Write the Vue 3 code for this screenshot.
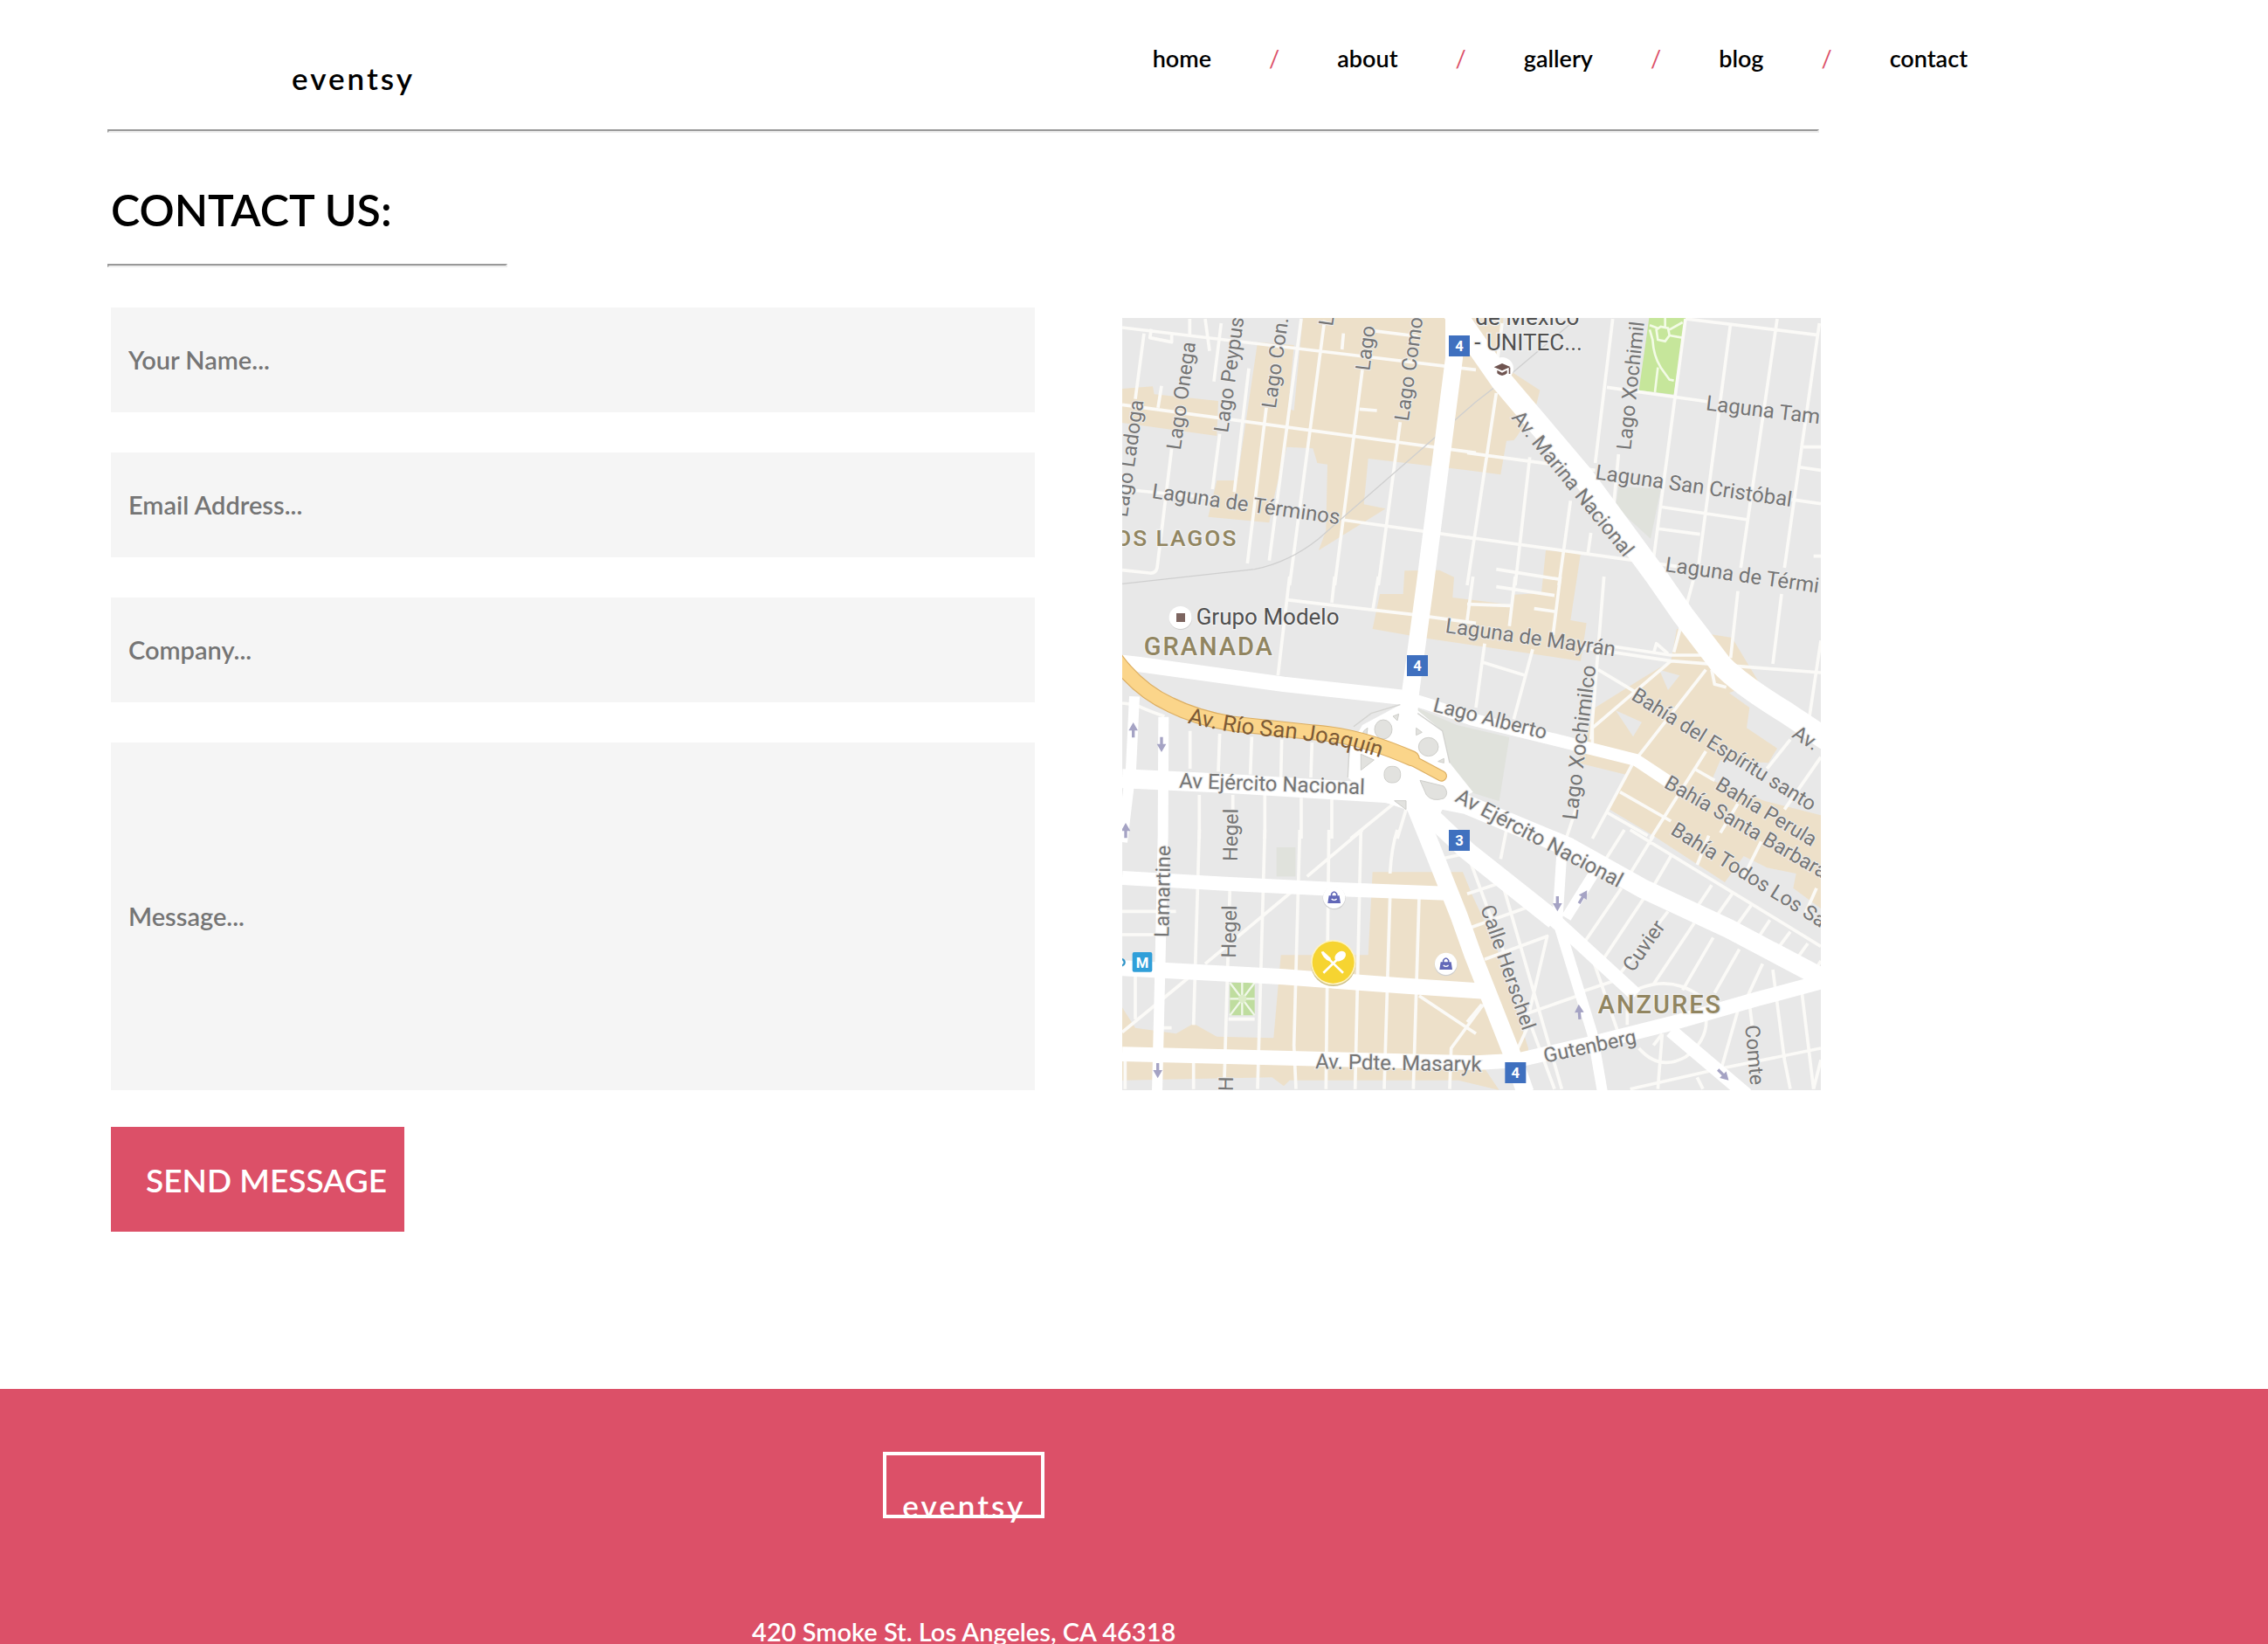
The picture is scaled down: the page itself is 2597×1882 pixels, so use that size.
<script setup>
import { reactive } from 'vue'

const links = ['home', 'about', 'gallery', 'blog', 'contact']
const form = reactive({ name: '', email: '', company: '', message: '' })

// The map is split in six tiles; each tile has its own origin.
const tiles = [
  {
    x: -45, y: -42,
    roads: 'M45 75L1260 220M45 340L1260 505M45 630L350 660M800 735L1260 800M120 95L90 320M215 490L165 900Q160 920 140 918L45 908M180 275L168 350M385 60L360 260M380 440L355 630M480 215L430 640M540 350L475 885M660 45L550 875M740 50L620 960M870 220L775 960M1000 400L925 960M805 95L800 150M900 85L1060 105M860 355L920 360M145 80L140 110L215 125V95M330 45L345 155M277 45V100',
    labels: [
      [62, 728, -82, 'Lago Ladoga'], [245, 497, -82, 'Lago Onega'], [408, 438, -82, 'Lago Peypus'],
      [572, 355, -82, 'Lago Con.'], [768, 72, -82, 'L'], [895, 225, -83, 'Lago'],
      [1028, 398, -82, 'Lago Como']
    ],
    wide: [[145, 660, 8, 'Laguna de Términos']]
  },
  {
    x: 1185, y: -42,
    roads: 'M500 45L440 540M520 510L500 720M905 60L795 890M1065 45L940 900M1210 60L1090 900M750 45L640 870M0 505L440 565M1110 665L1215 680M0 795L720 895M100 300L0 960M215 520L165 960M355 670L315 960M425 780L415 850M480 280L830 330M750 45L1200 100M660 690L965 735M650 765L800 785M1155 485H1215M1145 555L1215 565M100 905L320 940M120 60L105 180M1190 860H1215',
    labels: [
      [562, 497, -84, 'Lago Xochimil'], [150, 385, 51, 'Av. Marina Nacional']
    ],
    wide: [
      [818, 358, 7, 'Laguna Tam'],
      [438, 595, 8, 'Laguna San Cristóbal'], [678, 912, 8, 'Laguna de Térmi']
    ]
  },
  {
    x: -45, y: 888,
    roads: 'M620 0L580 340M775 0L765 90M925 0L905 120M610 80L1040 130L1260 160M45 435L90 440Q130 460 190 480M278 530V660M380 540L375 670M490 550L485 680M593 560L590 690M697 570L693 690M310 750V900M425 750V810M535 750V900M660 760V900M765 760V900M990 770L830 900M1020 800L990 900M1250 0L1230 150',
    labels: [[1110, 462, 14, 'Lago Alberto']],
    wide: [
      [240, 725, 2, 'Av Ejército Nacional'], [1153, 192, 8, 'Laguna de Mayrán'],
      [1185, 770, 28, 'Av Ejército Nacional']
    ]
  },
  {
    x: 1185, y: 888,
    roads: 'M470 0L425 560M165 0L145 170M320 0L295 200M0 95L150 100M100 35L300 65M230 110L300 120M780 0L710 260M930 50L905 280M1080 60L1050 300M1215 220L1170 520M500 240L700 270L820 270M400 245L700 290L1215 330M640 265L650 230L690 265M700 290L430 520V600M820 320L570 640L430 900M450 320L600 410M60 230L30 450M225 250L160 490M55 295L200 340M1110 560L1030 660M1215 620L1090 800M820 600L630 900M780 660L850 700M525 740L700 840M480 810L620 890M930 780L870 880M380 780L340 900M840 320L850 370L890 380',
    labels: [
      [848, 727, 31, 'Bahía Perula'], [673, 722, 30, 'Bahía Santa Barbara'],
      [695, 882, 32, 'Bahía Todos Los Sa'], [1112, 550, 32, 'Av.'], [560, 420, 32, 'Bahía del Espíritu santo']
    ],
    wide: [[377, 838, -83, 'Lago Xochimilco']]
  },
  {
    x: -45, y: 1758,
    roads: 'M310 0L290 670M290 790V890M420 0L415 100M415 200L395 890M535 0L510 890M655 0L635 740L642 890M755 0L745 890M865 0L845 890M990 0Q970 60 965 150M965 230L945 890M1065 230L1045 890M870 0L680 160M630 210L330 460M270 510L45 695M45 280H230M45 360H160M90 500V650M55 790V890M1065 570L1260 700M1285 600L1175 750L1170 890M185 680H215M410 650H500M1140 100L1230 80',
    labels: [
      [205, 370, -89, 'Lamartine'], [440, 108, -89, 'Hegel'], [435, 440, -89, 'Hegel'], [425, 898, -89, 'H']
    ],
    wide: [[708, 820, 1, 'Av. Pdte. Masaryk']]
  },
  {
    x: 1185, y: 1758,
    roads: 'M560 0L1215 400M540 0L470 110M640 20L560 150M700 90L630 210M830 20L790 120M1010 40L950 160M1200 200L1160 290M840 190L780 280M910 220L840 320M975 260L910 350M1040 310L980 400M1110 350L1050 430M1170 390L1120 460M1215 450L1190 490M530 200L400 390M610 230L470 440M690 280L520 500M780 320L640 530M845 370L740 550M935 410L850 560M1015 460L950 600M1050 480L1090 790L1110 890M1150 560L1190 890M970 600L980 680M930 620L870 830M590 545Q700 500 800 570M820 640Q830 720 750 780Q660 830 590 750M550 620V670M670 700L655 890M560 890L870 820L1215 750M380 560L530 510M180 640L380 570M430 440L520 700M120 180L325 890M0 80L300 890M0 220L120 180M0 340L210 265M60 445L275 365L215 620M1215 790L1190 890M135 0L115 100M640 740L670 700M220 650L170 760M790 850L810 890M0 660L50 600',
    labels: [
      [570, 492, -55, 'Cuvier'], [268, 800, -12, 'Gutenberg'], [955, 672, 85, 'Comte'], [45, 268, 71, 'Calle Herschel']
    ],
    wide: []
  }
]

const shields = [[1122, 60, 4], [978, 1158, 4], [1122, 1758, 3], [1315, 2556, 4]]
const bags = [[728, 1990], [1112, 2218]]
const arrows = [
  [38, 1415, 0], [135, 1465, 180], [12, 1760, 0], [122, 2585, 180],
  [1495, 2012, 180], [1583, 1988, 32], [1570, 2383, -4], [2065, 2600, 135]
]
</script>

<template>
  <div class="page">
    <header class="header">
      <a class="logo" href="#">eventsy</a>
      <nav class="nav">
        <template v-for="(link, i) in links" :key="link">
          <span v-if="i" class="slash">/</span>
          <a :href="'#' + link">{{ link }}</a>
        </template>
      </nav>
    </header>

    <main class="main">
      <hr class="rule">
      <h1 class="title">CONTACT US:</h1>
      <hr class="rule rule-short">

      <div class="columns">
        <form class="form" @submit.prevent>
          <input v-model="form.name" type="text" placeholder="Your Name..." aria-label="Your name">
          <input v-model="form.email" type="email" placeholder="Email Address..." aria-label="Email address">
          <input v-model="form.company" type="text" placeholder="Company..." aria-label="Company">
          <textarea v-model="form.message" placeholder="Message..." aria-label="Message"></textarea>
          <button type="submit">SEND MESSAGE</button>
        </form>

        <svg class="map" viewBox="0 0 2400 2652" role="img" aria-label="Map">
          <rect width="2400" height="2652" fill="#e8e8e8" />

          <g fill="#ede0c9">
            <path d="M0 243L105 235L110 262L330 285L325 405L0 360Z" />
            <path d="M465 83L590 93L570 313L590 318L620 0L1310 0L1290 150L1330 180L1435 248L1420 308L1355 408L1345 420L1320 422L1300 538L1185 523L845 483L830 640L905 655L675 798L700 730L705 503L670 498L655 448L565 443L525 600L505 703L295 683L325 558L395 558Z" />
            <path d="M860 1068L885 948L965 948L970 868L1090 866L1140 890L1135 960L1335 985L1345 950L1440 945L1455 798L1575 808L1540 1038L1595 1048L1575 1178L1045 1100Z" />
            <path transform="translate(1185 888)" d="M720 180L910 210L1000 360L900 400L970 450L960 520L1065 590L1035 640L870 630L840 700L1020 770L1215 820V1140L1120 1070L1130 1020L1030 1000L950 960L885 1050L640 890L490 800L545 680L380 640L440 450L600 350L700 290Z" />
            <path transform="translate(-45 1758)" d="M905 145L1215 145L1250 230L1330 400L1440 750L1440 770L1260 775L1340 894L1200 860L620 860L600 880L560 850L45 860V610L90 680L230 700L290 665L370 710L565 715L590 430L890 430Z" />
          </g>
          <g fill="#e8e8e8">
            <path d="M1695 1348L1785 1388L1755 1438ZM1845 1208L1915 1228L1875 1278ZM1345 910L1440 915L1435 945L1345 940Z" />
          </g>
          <g fill="#e0e2dc">
            <path d="M1705 578L1850 588L1815 758L1695 648Z" />
            <path d="M1010 1338L1150 1398L1330 1440L1295 1660L1200 1630L1115 1520Z" />
            <path d="M530 1818H595V1918H530Z" />
          </g>
          <path d="M1810 0H1935L1895 263L1775 248Z" fill="#c6e69b" />
          <g fill="none" stroke="#f3fbe6" stroke-width="8">
            <path d="M1812 40L1822 75Q1825 130 1850 170L1880 212L1895 215M1840 170L1830 255M1835 40L1850 30L1875 35L1880 60L1865 80L1840 75ZM1880 40L1925 15M1880 60L1925 68M1865 30V0M1840 35L1812 25" />
          </g>
          <path d="M370 2283H455V2395H370Z" fill="#bfdd9f" />
          <path d="M370 2283L455 2395M455 2283L370 2395M412 2283V2395M370 2338H455" stroke="#f1f8ea" stroke-width="7" />
          <circle cx="413" cy="2338" r="14" fill="#dcecc8" />

          <g fill="none" stroke="#fbfaf7" stroke-width="11" stroke-linejoin="round">
            <path v-for="t in tiles" :key="t.x + '/' + t.y" :transform="`translate(${t.x} ${t.y})`" :d="t.roads" />
          </g>
          <path d="M0 913L455 863Q575 838 675 758L1215 288L1305 218L1540 20" fill="none" stroke="#cfcfcf" stroke-width="4" />

          <g fill="none" stroke="#fff" stroke-linejoin="round">
            <path stroke-width="60" d="M1140 -20L1140 138L1040 918L990 1288L975 1488" />
            <path stroke-width="76" d="M1125 -40L1305 218L1585 548L1835 888L1925 1018L2055 1188Q2120 1258 2285 1358L2420 1448" />
            <path stroke-width="52" d="M0 1183L60 1190L555 1258L965 1303" />
            <path stroke-width="42" d="M965 1300L1055 1328L1200 1378L1485 1448L1765 1518L1885 1598" />
            <path stroke-width="66" d="M0 1582L355 1598L905 1632L1105 1656L1185 1672L1535 1818L1785 1958L2085 2098L2420 2275" />
            <path stroke-width="60" d="M975 1600L1055 1798L1155 2048L1205 2188L1335 2518L1385 2660" />
            <path stroke-width="64" d="M985 1640L1185 1830L1485 2068" />
            <path stroke-width="48" d="M1485 2068L1765 2325M1885 2448L2145 2668" />
            <path stroke-width="36" d="M1510 1838L1495 2068L1615 2458L1650 2660M1525 2060L1625 1900" />
            <path stroke-width="50" d="M0 2528L1215 2558L1355 2550L1625 2488L1885 2423L2185 2338L2420 2275" />
            <path stroke-width="48" d="M0 1923L355 1943L755 1963L1115 1976" />
            <path stroke-width="54" d="M0 2233L555 2263L955 2293L1245 2312" />
            <path stroke-width="36" d="M142 1370L140 1780L130 2238L120 2660M42 1300L30 1548L0 1800" />
          </g>

          <g transform="translate(-45 888)">
            <path d="M820 690L830 580L870 510L1000 440L1060 460L1145 530L1170 640L1250 740L1150 790L1110 870L1020 800L900 760Z" fill="#fff" />
            <path d="M820 690L825 580M840 515L900 470L1000 440M1060 470L1145 530L1170 640" fill="none" stroke="#d3d3d0" stroke-width="4" />
            <g fill="#e2e2df" stroke="#cfcfcb" stroke-width="3">
              <ellipse cx="942" cy="525" rx="30" ry="33" />
              <ellipse cx="1097" cy="585" rx="34" ry="32" />
              <rect x="945" y="652" width="56" height="56" rx="24" />
              <path d="M1068 700L1150 720Q1170 745 1150 762Q1110 775 1090 750Z" />
              <path d="M875 530L888 520L885 545L865 555ZM865 610L910 630L865 665ZM975 480L995 472L990 495ZM1055 520L1075 535L1055 545ZM1130 635L1150 625V640ZM980 770H1020V800Z" />
            </g>
            <g fill="none" stroke-linecap="round">
              <path d="M20 280Q100 390 210 440Q300 485 420 505L700 535Q860 545 1040 625" stroke="#dcae62" stroke-width="54" />
              <path d="M1020 620L1142 685" stroke="#dcae62" stroke-width="38" />
              <path d="M20 280Q100 390 210 440Q300 485 420 505L700 535Q860 545 1040 625" stroke="#fbd58a" stroke-width="47" />
              <path d="M1020 620L1142 685" stroke="#fbd58a" stroke-width="31" />
            </g>
            <path id="rio" d="M268 502Q420 540 560 550Q740 565 860 600T1100 680" fill="none" />
          </g>

          <g fill="#a5a3c4">
            <path v-for="(a, i) in arrows" :key="i" :transform="`translate(${a[0]} ${a[1]}) rotate(${a[2]})`" d="M0 -26L16 2H5V26H-5V2H-16Z" />
          </g>

          <g v-for="t in tiles" :key="t.x + ':' + t.y" class="street" :transform="`translate(${t.x} ${t.y})`">
            <text v-for="(l, i) in t.labels" :key="i" :transform="`translate(${l[0]} ${l[1]}) rotate(${l[2]})`">{{ l[3] }}</text>
            <text v-for="(l, i) in t.wide" :key="'w' + i" class="street-wide" :transform="`translate(${l[0]} ${l[1]}) rotate(${l[2]})`">{{ l[3] }}</text>
          </g>
          <g transform="translate(-45 888)">
            <text class="river"><textPath href="#rio">Av. Río San Joaquín</textPath></text>
          </g>
          <g class="district">
            <text x="-24" y="783" font-size="79">OS LAGOS</text>
            <text x="74" y="1158" font-size="87">GRANADA</text>
            <text x="1634" y="2388" font-size="87">ANZURES</text>
          </g>
          <g class="place">
            <text x="1213" y="23">de México</text>
            <text x="1210" y="111">- UNITEC...</text>
            <text x="254" y="1053">Grupo Modelo</text>
          </g>

          <circle cx="201" cy="1032" r="39" fill="#cfcfcf" />
          <circle cx="200" cy="1029" r="39" fill="#fff" />
          <path d="M186 1014H216V1044H186Z" fill="#7d6560" />
          <circle cx="1305" cy="174" r="39" fill="#fff" />
          <path d="M1277 169L1305 156L1333 168L1305 181ZM1288 179L1305 188L1322 179V190Q1305 206 1288 190ZM1328 170H1333V192H1328Z" fill="#6f5450" />

          <g v-for="(s, i) in shields" :key="i" class="shield">
            <rect :x="s[0]" :y="s[1]" width="72" height="72" fill="#3f70bf" />
            <text :x="s[0] + 36" :y="s[1] + 54">{{ s[2] }}</text>
          </g>

          <g v-for="(b, i) in bags" :key="i" :transform="`translate(${b[0]} ${b[1]})`">
            <circle cy="3" r="39" fill="#cfcfcf" />
            <circle r="38" fill="#fff" />
            <path d="M-18 -6H18L22 20H-22Z" fill="#6268b8" />
            <path d="M-9 -4V-12Q0 -26 9 -12V-4" fill="none" stroke="#6268b8" stroke-width="5" />
            <path d="M-9 5Q0 13 9 5" fill="none" stroke="#fff" stroke-width="4" />
          </g>

          <g transform="translate(725 2213)">
            <circle cy="5" r="77" fill="#cdbf88" />
            <circle r="77" fill="#fdf3c4" />
            <circle r="72" fill="#f6d431" />
            <path d="M-34 36L14 -10M34 36L-14 -10" stroke="#fff" stroke-width="8" />
            <ellipse cx="24" cy="-21" rx="21" ry="15" transform="rotate(-38 24 -21)" fill="#fff" />
            <path d="M-42 -36L-34 -38L-8 -14L-14 -4Q-34 -12 -42 -36Z" fill="#fff" />
          </g>

          <circle cx="-3" cy="2213" r="11" fill="none" stroke="#2f94c8" stroke-width="7" />
          <rect x="35" y="2178" width="68" height="68" rx="6" fill="#309fd9" />
          <text class="metro" x="69" y="2232">M</text>
        </svg>
      </div>
    </main>

    <footer class="footer">
      <div class="footer-inner">
        <a class="logo footer-logo" href="#">eventsy</a>
        <p class="address">420 Smoke St. Los Angeles, CA 46318</p>
      </div>
    </footer>
  </div>
</template>

<style>
body {
  margin: 0;
  background: #fff;
}
</style>

<style scoped>
.page {
  display: flex;
  flex-direction: column;
  height: 100vh;
  overflow: hidden;
  font-family: "Gill Sans", Lato, sans-serif;
  font-weight: 600;
  color: #000;
}
a {
  color: inherit;
  text-decoration: none;
}
.header {
  display: flex;
  flex: none;
  justify-content: space-between;
  height: 148px;
  padding: 0 344px 0 334px;
  box-sizing: border-box;
}
.logo {
  font-size: 35px;
  line-height: 44px;
  letter-spacing: 3px;
}
.header .logo {
  margin-top: 67px;
}
.nav {
  display: flex;
  gap: 66px;
  margin-top: 47px;
  font-size: 27px;
  line-height: 40px;
}
.slash {
  color: #dc5068;
  font-weight: 400;
}
.main {
  flex: none;
  margin: 0 512px 0 127px;
}
.rule {
  margin: 0 2px 0 -4px;
  border: 2px solid #eee;
  border-color: #999 #eee #eee #999;
}
.rule-short {
  width: 454px;
}
.title {
  margin: 0;
  padding: 58px 0 32px;
  font-size: 50px;
  line-height: 60px;
  font-weight: 600;
}
.columns {
  display: grid;
  grid-template-columns: 1058fr 800fr;
  gap: 100px;
  align-items: start;
  margin-top: 46px;
}
.form {
  display: flex;
  flex-direction: column;
  gap: 46px;
}
.form input,
.form textarea {
  width: 100%;
  height: 120px;
  padding: 0 20px 2px;
  box-sizing: border-box;
  border: 0;
  border-radius: 0;
  background: #f5f5f5;
  font: inherit;
  font-size: 29px;
  line-height: 40px;
  resize: none;
}
.form textarea {
  height: 398px;
  padding-top: 179px;
}
.form ::placeholder {
  color: #757575;
  opacity: 1;
}
.form button {
  align-self: flex-start;
  height: 120px;
  margin-top: -4px;
  padding: 0 20px 0 40px;
  border: 0;
  background: #dc5068;
  color: #fff;
  font: inherit;
  font-size: 37px;
}
.map {
  width: 100%;
  margin-top: 12px;
  font-family: Roboto, sans-serif;
  font-weight: 400;
}
.street {
  font-size: 70px;
  fill: #757575;
  stroke: #ececec;
  stroke-width: 6px;
  paint-order: stroke;
}
.street-wide {
  font-size: 72px;
}
.river {
  font-size: 77px;
  fill: #7c5a36;
}
.district {
  fill: #918560;
  font-weight: 500;
  letter-spacing: 6px;
  stroke: #f0f0f0;
  stroke-width: 8px;
  paint-order: stroke;
}
.place {
  font-size: 78px;
  fill: #505050;
  stroke: #f0f0f0;
  stroke-width: 8px;
  paint-order: stroke;
}
.shield text,
.metro {
  fill: #fff;
  font-size: 50px;
  font-weight: 700;
  text-anchor: middle;
}
.footer {
  flex: 1 0 auto;
  margin-top: 180px;
  background: #dc5068;
  color: #fff;
}
.footer-inner {
  display: flex;
  flex-direction: column;
  align-items: center;
  width: 85%;
  padding-top: 72px;
}
.footer-logo {
  height: 68px;
  padding: 0 18px;
  border: 4px solid #fff;
  line-height: 114px;
}
.address {
  margin: 110px 0 0;
  font-size: 29px;
  line-height: 40px;
}
</style>
